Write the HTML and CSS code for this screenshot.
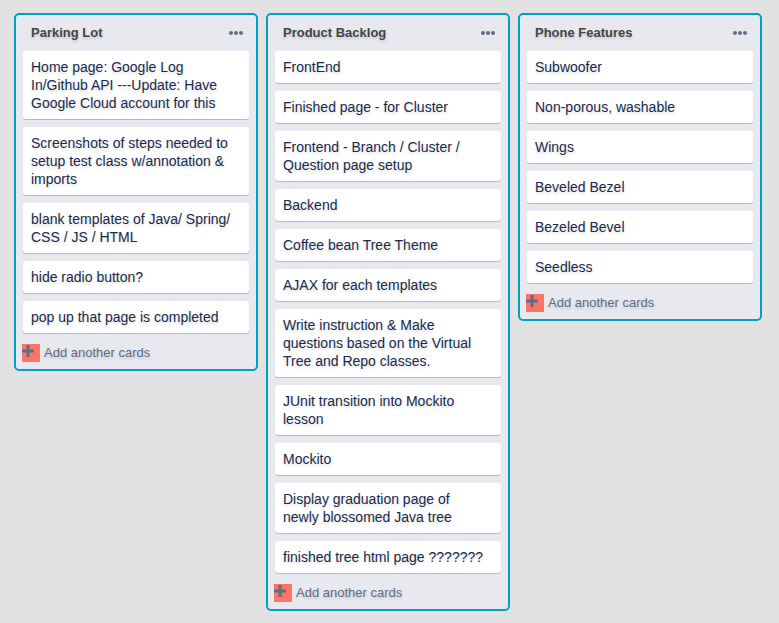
FILE: index.html
```html
<!DOCTYPE html>
<html lang="en">
<head>
<meta charset="utf-8">
<meta name="viewport" content="width=device-width, initial-scale=1">
<title>Board</title>
<link rel="stylesheet" href="styles.css">
</head>
<body>
<main class="board">
  <section class="list">
    <header class="list-header">
      <h2 class="list-title">Parking Lot</h2>
      <button class="list-menu" type="button" aria-label="List actions"><svg width="14" height="4" viewBox="0 0 14 4" aria-hidden="true"><circle cx="2" cy="2" r="2"/><circle cx="7" cy="2" r="2"/><circle cx="12" cy="2" r="2"/></svg></button>
    </header>
    <ul class="cards">
      <li class="card">Home page: Google Log In/Github API ---Update: Have Google Cloud account for this</li>
      <li class="card">Screenshots of steps needed to setup test class w/annotation &amp; imports</li>
      <li class="card">blank templates of Java/ Spring/ CSS / JS / HTML</li>
      <li class="card">hide radio button?</li>
      <li class="card">pop up that page is completed</li>
    </ul>
    <button class="add-card" type="button"><span class="add-icon"><svg width="13" height="14" viewBox="0 0 13 14" aria-hidden="true"><path d="M6 1v12M0 7h12"/></svg></span>Add another cards</button>
  </section>
  <section class="list">
    <header class="list-header">
      <h2 class="list-title">Product Backlog</h2>
      <button class="list-menu" type="button" aria-label="List actions"><svg width="14" height="4" viewBox="0 0 14 4" aria-hidden="true"><circle cx="2" cy="2" r="2"/><circle cx="7" cy="2" r="2"/><circle cx="12" cy="2" r="2"/></svg></button>
    </header>
    <ul class="cards">
      <li class="card">FrontEnd</li>
      <li class="card">Finished page - for Cluster</li>
      <li class="card">Frontend - Branch / Cluster / Question page setup</li>
      <li class="card">Backend</li>
      <li class="card">Coffee bean Tree Theme</li>
      <li class="card">AJAX for each templates</li>
      <li class="card">Write instruction &amp; Make questions based on the Virtual Tree and Repo classes.</li>
      <li class="card">JUnit transition into Mockito lesson</li>
      <li class="card">Mockito</li>
      <li class="card">Display graduation page of newly blossomed Java tree</li>
      <li class="card">finished tree html page ???????</li>
    </ul>
    <button class="add-card" type="button"><span class="add-icon"><svg width="13" height="14" viewBox="0 0 13 14" aria-hidden="true"><path d="M6 1v12M0 7h12"/></svg></span>Add another cards</button>
  </section>
  <section class="list">
    <header class="list-header">
      <h2 class="list-title">Phone Features</h2>
      <button class="list-menu" type="button" aria-label="List actions"><svg width="14" height="4" viewBox="0 0 14 4" aria-hidden="true"><circle cx="2" cy="2" r="2"/><circle cx="7" cy="2" r="2"/><circle cx="12" cy="2" r="2"/></svg></button>
    </header>
    <ul class="cards">
      <li class="card">Subwoofer</li>
      <li class="card">Non-porous, washable</li>
      <li class="card">Wings</li>
      <li class="card">Beveled Bezel</li>
      <li class="card">Bezeled Bevel</li>
      <li class="card">Seedless</li>
    </ul>
    <button class="add-card" type="button"><span class="add-icon"><svg width="13" height="14" viewBox="0 0 13 14" aria-hidden="true"><path d="M6 1v12M0 7h12"/></svg></span>Add another cards</button>
  </section>
</main>
</body>
</html>
```

FILE: styles.css
```css
* {
  box-sizing: border-box;
}

body {
  margin: 0;
  background: #e2e2e2;
  color: #172b4d;
  font: 14px/18px "Liberation Sans", Arial, sans-serif;
}

.board {
  display: grid;
  grid-template-columns: repeat(3, minmax(0, 1fr));
  align-items: start;
  gap: 8px;
  padding: 13px 17px 13px 14px;
}

.list {
  padding: 0 7px 7px;
  border: 2px solid #00a2c4;
  border-radius: 5px;
  background: #e8e9ef;
  text-shadow: 0 2px 3px rgba(0, 0, 0, 0.15);
}

.list-header {
  display: flex;
  align-items: center;
  justify-content: space-between;
  height: 36px;
  padding: 0 6px 0 8px;
}

.list-title {
  margin: 0;
  color: #444;
  font-size: 13px;
  font-weight: 700;
}

.list-menu {
  display: flex;
  padding: 0;
  border: 0;
  background: none;
  fill: #5e6c84;
}

.cards {
  display: grid;
  gap: 8px;
  margin: 0;
  padding: 0;
  list-style: none;
}

.card {
  padding: 7px 14px 7px 8px;
  border-radius: 3px;
  background: #fff;
  box-shadow: 0 1px 0 #b3b7c4;
}

.add-card {
  display: flex;
  align-items: center;
  gap: 4px;
  margin: 11px 0 0 -1px;
  padding: 0;
  border: 0;
  background: none;
  color: #5e6c84;
  font: 13px/18px "Liberation Sans", Arial, sans-serif;
  text-shadow: inherit;
}

.add-icon {
  width: 18px;
  height: 18px;
  background: #fa7566;
}

.add-icon svg {
  display: block;
  fill: none;
  stroke: #5e6c84;
  stroke-width: 3;
}
```
